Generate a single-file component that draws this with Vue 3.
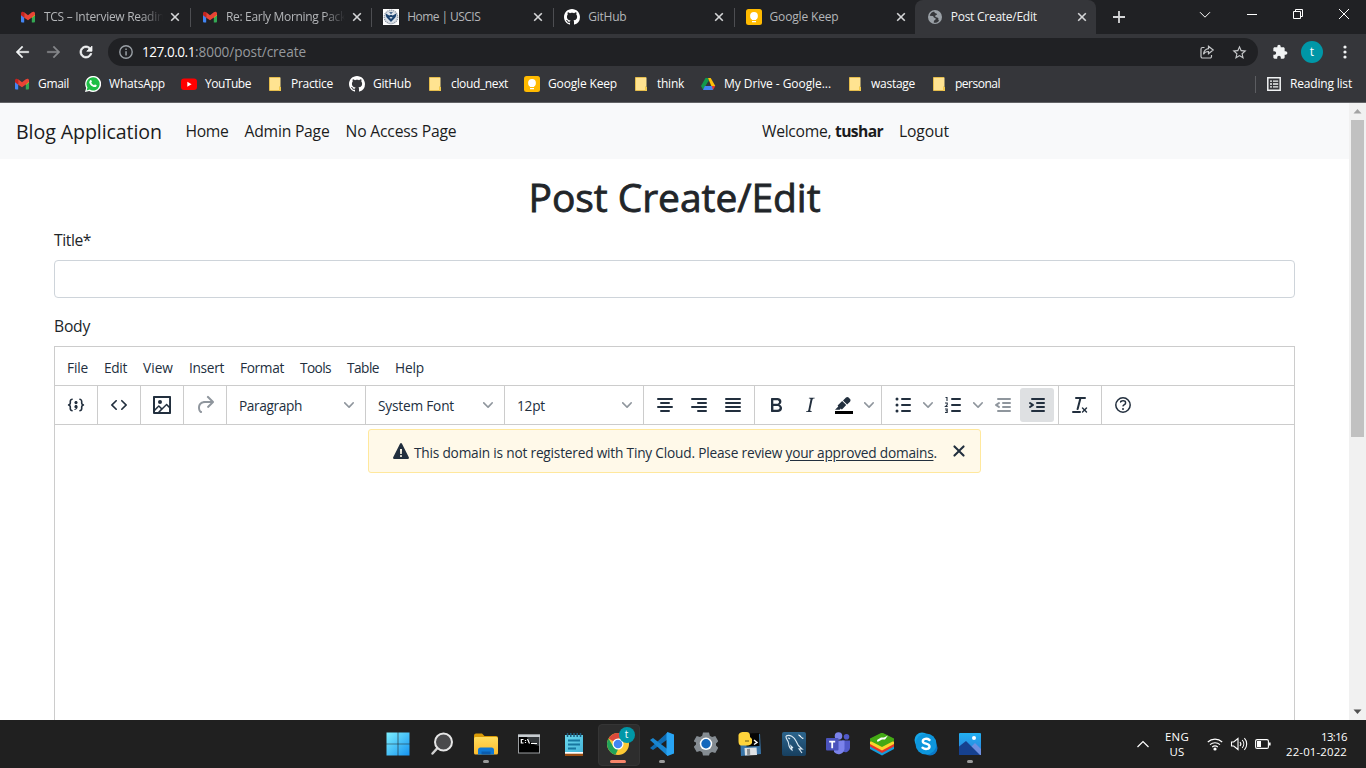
<script setup>
// Spreads the letters of a label so that it fills a given width.
const vFit = {
  mounted(el, { value }) {
    const natural = el.getBoundingClientRect().width
    const count = el.textContent.length
    el.style.letterSpacing = (value - natural) / count + 'px'
  },
}

const tabs = [
  { icon: 'gmail', title: 'TCS – Interview Readin', w: 120, fade: true },
  { icon: 'gmail', title: 'Re: Early Morning Pack', w: 120, fade: true },
  { icon: 'uscis', title: 'Home | USCIS', w: 73 },
  { icon: 'github', title: 'GitHub', w: 38 },
  { icon: 'keep', title: 'Google Keep', w: 69 },
  { icon: 'globe', title: 'Post Create/Edit', w: 86, active: true },
]

const bookmarks = [
  { icon: 'gmail', text: 'Gmail', w: 31 },
  { icon: 'whatsapp', text: 'WhatsApp', w: 56 },
  { icon: 'youtube', text: 'YouTube', w: 46 },
  { icon: 'folder', text: 'Practice', w: 42 },
  { icon: 'github', text: 'GitHub', w: 38 },
  { icon: 'folder', text: 'cloud_next', w: 57 },
  { icon: 'keep', text: 'Google Keep', w: 69 },
  { icon: 'folder', text: 'think', w: 27 },
  { icon: 'drive', text: 'My Drive - Google...', w: 107 },
  { icon: 'folder', text: 'wastage', w: 44 },
  { icon: 'folder', text: 'personal', w: 45 },
]

const menus = [
  ['File', 21], ['Edit', 23], ['View', 30], ['Insert', 35],
  ['Format', 44], ['Tools', 31], ['Table', 32], ['Help', 29],
]

const groups = [
  [{ icon: 'codesample' }],
  [{ icon: 'source' }],
  [{ icon: 'image' }],
  [{ icon: 'redo', off: true }],
  [{ select: 'Paragraph', w: 63 }],
  [{ select: 'System Font', w: 76 }],
  [{ select: '12pt', w: 28 }],
  [{ icon: 'aligncenter' }, { icon: 'alignright' }, { icon: 'justify' }],
  [{ icon: 'bold' }, { icon: 'italic' }, { icon: 'highlight', split: true }],
  [{ icon: 'bullist', split: true }, { icon: 'numlist', split: true }, { icon: 'outdent', off: true }, { icon: 'indent', on: true }],
  [{ icon: 'removeformat' }],
  [{ icon: 'help' }],
]

const apps = [
  { icon: 'windows' }, { icon: 'search' }, { icon: 'explorer', open: true }, { icon: 'cmd' },
  { icon: 'notepad' }, { icon: 'chrome', current: true }, { icon: 'vscode', open: true },
  { icon: 'settings' }, { icon: 'python' }, { icon: 'mysql' }, { icon: 'teams' },
  { icon: 'bluestacks' }, { icon: 'skype' }, { icon: 'photos', open: true },
]
</script>

<template>
  <div class="screen">
    <svg class="defs" aria-hidden="true">
      <defs>
        <linearGradient id="g-win" x1="0" y1="0" x2="1" y2="1"><stop offset="0" stop-color="#7df0ff" /><stop offset="1" stop-color="#1593f0" /></linearGradient>
        <linearGradient id="g-fold" x1="0" y1="0" x2="0" y2="1"><stop offset="0" stop-color="#ffdc5c" /><stop offset="1" stop-color="#fdbb2d" /></linearGradient>
        <linearGradient id="g-note" x1="0" y1="0" x2="1" y2="1"><stop offset="0" stop-color="#6ad9ee" /><stop offset="1" stop-color="#45b4d8" /></linearGradient>
        <linearGradient id="g-sql" x1="0" y1="0" x2="0" y2="1"><stop offset="0" stop-color="#2c648c" /><stop offset="1" stop-color="#173f5f" /></linearGradient>
        <linearGradient id="g-sky" x1="0" y1="0" x2="0" y2="1"><stop offset="0" stop-color="#22b0f2" /><stop offset="1" stop-color="#2d7bd8" /></linearGradient>
      </defs>

      <symbol id="gmail" viewBox="0 0 16 16">
        <path fill="#4285f4" d="M1 5l3.2 2.4v6H2a1 1 0 01-1-1z" />
        <path fill="#34a853" d="M15 5l-3.2 2.4v6H14a1 1 0 001-1z" />
        <path fill="#fbbc04" d="M11.8 4.5L15 4.2V6.300l-3.200 2.600z" />
        <path fill="#c5221f" d="M1 4.300C1 2.800 2.700 2.200 4.200 3.300v5.500L1 6.300z" />
        <path fill="#ea4335" d="M4.200 3.300L8 6.200l3.800-2.900C13.300 2.200 15 2.800 15 4.300v1.500l-3.200 2.700L8 11.300 4.200 8.700z" />
      </symbol>
      <symbol id="uscis" viewBox="0 0 16 16">
        <path fill="#fff" d="M0 0h16v16H0z" />
        <circle cx="8" cy="8" r="6.800" fill="#d5dae1" stroke="#8b95a3" stroke-width="1.200" stroke-dasharray="1.200 .8" />
        <circle cx="8" cy="8" r="5.200" fill="#dfe5ec" />
        <path fill="#1d4470" d="M2.800 4.500l3.400 2L8 5.800l1.800.7 3.400-2c.3 2-.4 3.800-1.800 5L8 13 4.600 9.500C3.200 8.300 2.500 6.500 2.800 4.500zM6 3.200h4L8 5z" />
        <path fill="#fff" d="M6.300 8.200h3.400L8 9.800z" />
      </symbol>
      <symbol id="github" viewBox="0 0 16 16">
        <path fill="#fff" d="M8 0C3.58 0 0 3.58 0 8c0 3.54 2.29 6.53 5.47 7.59.4.07.55-.17.55-.38 0-.19-.01-.82-.01-1.49-2.01.37-2.53-.49-2.69-.94-.09-.23-.48-.94-.82-1.130-.28-.15-.68-.52-.01-.53.63-.01 1.080.58 1.230.82.72 1.210 1.870.87 2.330.66.07-.52.28-.87.51-1.070-1.780-.2-3.640-.89-3.640-3.950 0-.87.31-1.590.82-2.150-.08-.2-.36-1.020.08-2.120 0 0 .67-.21 2.200.82.64-.18 1.320-.27 2-.27s1.360.09 2 .27c1.530-1.040 2.200-.82 2.200-.82.44 1.100.16 1.920.08 2.120.51.56.82 1.270.82 2.150 0 3.070-1.870 3.750-3.650 3.950.29.25.54.73.54 1.480 0 1.070-.01 1.930-.01 2.200 0 .21.15.46.55.38A8.010 8.010 0 0016 8c0-4.420-3.580-8-8-8z" />
      </symbol>
      <symbol id="keep" viewBox="0 0 16 16">
        <rect width="16" height="16" rx="2.500" fill="#ffba00" />
        <circle cx="8" cy="7" r="3.900" fill="#fff" /><path fill="#fff" d="M6 9h4v2H6zM6 12h4v1.300H6z" />
      </symbol>
      <symbol id="globe" viewBox="0 0 16 16">
        <circle cx="8" cy="8" r="7" fill="#9aa0a6" />
        <path fill="#35363a" d="M7.200 2.400c-2 .2-4 2-4.500 4.400l3 .3c1 .2.600 1.500 1.800 1.700 1 .1 1.500.8 1 1.700-.4.700-1.500.6-1.600 1.500l-.1 1.700c2.200.4 4.300-.6 5.400-2.300-.9 0-1-.7-.8-1.400.200-.8-.3-1.500-1.300-1.600-1.200 0-2.200-.7-1.800-1.700.3-.8 1.400-.5 1.700-1.200.2-.6-.2-1-.8-1.100-1-.2-1.900-1-2-2z" />
      </symbol>
      <symbol id="whatsapp" viewBox="0 0 16 16">
        <path fill="#fff" d="M0 16l1.200-4.100A8 8 0 114.200 14.900z" />
        <path fill="#1fbe46" d="M1.600 14.400l.9-2.900a6.600 6.600 0 112.200 2.100z" />
        <path fill="#fff" d="M5.300 4.200c.4-.4.9-.3 1.100.2l.5 1.200c.1.400-.5.800-.6 1.100.6 1.200 1.500 2 2.800 2.500.4-.2.600-.9 1-.8l1.300.7c.4.2.3.700.1 1.100-.5.900-1.700 1.100-2.800.7-2.200-.7-3.600-2.200-4.300-4-.3-.9.2-2 .9-2.700z" />
      </symbol>
      <symbol id="youtube" viewBox="0 0 16 16"><rect y="2.500" width="16" height="11.500" rx="3" fill="#f00" /><path fill="#fff" d="M6.300 5.800v4.900l4.300-2.450z" /></symbol>
      <symbol id="folder" viewBox="0 0 16 16">
        <path fill="#ffe391" d="M2.500 1.500h11v9.500l.5 1v2.500H2.500z" /><path fill="none" stroke="#e5bd4c" d="M13 1.500H2.500v13h11.200M12.500 14v-3.500" /><path fill="#f2c94c" d="M12 11h2v4h-2z" />
      </symbol>
      <symbol id="drive" viewBox="0 0 16 16">
        <path fill="#12994d" d="M5.500 2H8l1 2.200L3.200 13.800 1 10z" /><path fill="#ffc107" d="M8 2h2.700L15.300 10h-4z" /><path fill="#e53935" d="M11.300 10h4L13 14l-3-3z" /><path fill="#4285f4" d="M4.800 10h6.900L13 14H3z" /><path fill="#35363a" d="M8 6.200L5.800 10h4.400z" />
      </symbol>

      <symbol id="codesample" viewBox="0 1 24 24"><path d="M7.1 11a2.800 2.800 0 01-.8 2 2.800 2.800 0 01.8 2v1.700c0 .3.1.6.4.8.2.3.5.4.8.4.3 0 .4.2.4.4v.8c0 .2-.1.4-.4.4-.7 0-1.400-.3-2-.8-.5-.6-.8-1.300-.8-2V15c0-.3-.1-.6-.4-.8-.2-.3-.5-.4-.8-.4a.4.4 0 01-.4-.4v-.8c0-.2.2-.4.4-.4.3 0 .6-.1.8-.4.3-.2.4-.5.4-.8V9.300c0-.7.3-1.400.8-2 .6-.5 1.300-.8 2-.8.3 0 .4.2.4.4v.8c0 .2-.1.4-.4.4-.3 0-.6.1-.8.4-.3.2-.4.5-.4.8V11zm9.800 0V9.300c0-.3-.1-.6-.4-.8-.2-.3-.5-.4-.8-.4a.4.4 0 01-.4-.4V7c0-.2.1-.4.4-.4.7 0 1.400.3 2 .8.5.6.8 1.300.8 2V11c0 .3.1.6.4.8.2.3.5.4.8.4.2 0 .4.2.4.4v.8c0 .2-.2.4-.4.4-.3 0-.6.1-.8.4-.3.2-.4.5-.4.8v1.700c0 .7-.3 1.400-.8 2-.6.5-1.300.8-2 .8a.4.4 0 01-.4-.4v-.8c0-.2.1-.4.4-.4.3 0 .6-.1.8-.4.3-.2.4-.5.4-.8V15a2.800 2.800 0 01.8-2 2.800 2.800 0 01-.8-2zm-3.300-.4c0 .4-.1.8-.5 1.100-.3.3-.7.5-1.100.5-.4 0-.8-.2-1.100-.5-.4-.3-.5-.7-.5-1.100 0-.5.1-.9.5-1.200.3-.3.7-.4 1.100-.4.4 0 .8.1 1.100.4.4.3.5.7.5 1.200zM12 13c.4 0 .8.1 1.100.5.4.3.5.7.5 1.100 0 1-.1 1.600-.5 2a3 3 0 01-1.100 1c-.4.3-.8.4-1.100.4a.5.5 0 01-.5-.5V17a3 3 0 001-.2l.6-.6c-.6 0-1-.2-1.300-.5-.2-.3-.3-.7-.3-1 0-.5.1-1 .5-1.200.3-.4.7-.5 1.100-.5z" /></symbol>
      <symbol id="source" viewBox="0 0 24 24"><path d="M9.800 15.700c.3.3.3.8 0 1-.3.4-.9.4-1.200 0l-4.400-4.100a.8.8 0 010-1.200l4.400-4.200c.3-.3.9-.3 1.200 0 .3.3.3.8 0 1.100L6 12l3.800 3.700zM14.200 15.700c-.3.3-.3.8 0 1 .4.4.9.4 1.200 0l4.400-4.100c.3-.3.3-.9 0-1.200l-4.400-4.200a.8.8 0 00-1.200 0c-.3.3-.3.8 0 1.100L18 12l-3.800 3.700z" /></symbol>
      <symbol id="image" viewBox="0 0 24 24"><path fill-rule="evenodd" d="M5 15.700l3.300-3.200c.3-.3.7-.3 1 0L12 15l4.100-4c.3-.4.8-.4 1 0l2 1.900V5H5v10.700zM5 18V19h3l2.800-2.900-2-2L5 17.900zm14-3l-2.500-2.400-6.400 6.500H19v-4zM4 3h16c.6 0 1 .4 1 1v16c0 .6-.4 1-1 1H4a1 1 0 01-1-1V4c0-.6.4-1 1-1zm6 8a2 2 0 100-4 2 2 0 000 4z" /></symbol>
      <symbol id="redo" viewBox="0 0 24 24"><path d="M17.600 10H12c-2.800 0-4.400 1.400-4.900 3.500-.4 2 .3 4 1.400 4.600a1 1 0 11-1 1.800c-2-1.200-2.900-4.100-2.300-6.800.6-3 3-5.100 6.800-5.100h5.600l-3.300-3.300a1 1 0 111.400-1.400l5 5a1 1 0 010 1.400l-5 5a1 1 0 01-1.400-1.400l3.300-3.300z" /></symbol>
      <symbol id="aligncenter" viewBox="0 0 24 24"><path class="ln" d="M5 6h14M8 10h8M5 14h14M8 18h8" /></symbol>
      <symbol id="alignright" viewBox="0 0 24 24"><path class="ln" d="M5 6h14M11 10h8M5 14h14M11 18h8" /></symbol>
      <symbol id="justify" viewBox="0 0 24 24"><path class="ln" d="M5 6h14M5 10h14M5 14h14M5 18h14" /></symbol>
      <symbol id="bold" viewBox="0 0 24 24"><path fill-rule="evenodd" d="M7.800 19c-.3 0-.5 0-.6-.2l-.2-.5V5.700c0-.2 0-.4.2-.5l.6-.2h5c1.500 0 2.700.3 3.500 1 .7.6 1.100 1.400 1.100 2.500a3 3 0 01-.6 1.900c-.4.6-1 1-1.600 1.200.4.1.9.3 1.300.6s.8.7 1 1.200c.4.4.5 1 .5 1.600 0 1.300-.4 2.300-1.300 3-.8.7-2.100 1-3.800 1H7.800zm5-8.300c.6 0 1.200-.1 1.600-.5.4-.3.6-.7.6-1.300 0-1.100-.8-1.700-2.300-1.700H9.300v3.500h3.400zm.5 6c.7 0 1.300-.1 1.700-.4.4-.4.6-.9.6-1.500s-.2-1-.7-1.400c-.4-.3-1-.4-2-.4H9.400v3.800h4z" /></symbol>
      <symbol id="italic" viewBox="0 0 24 24"><path d="M16.700 4.700l-.1.900h-.3c-.6 0-1 0-1.400.3-.3.3-.4.6-.5 1.100l-2.100 9.800v.6c0 .5.4.8 1.400.8h.2l-.2.8H8l.2-.8h.2c1.100 0 1.800-.5 2-1.500l2-9.800.1-.5c0-.6-.4-.8-1.400-.8h-.3l.2-.9h5.800z" /></symbol>
      <symbol id="highlight" viewBox="0 0 24 24"><path fill="#000" d="M3 18h18v3H3z" /><path d="M7.700 16.700H3l3.300-3.300-.7-.8L10.200 8l4 4.100-4 4.200c-.2.2-.6.2-.8 0l-.6-.7-1.100 1.100zm5-7.500L11 7.400l3-2.900a2 2 0 012.600 0L18 6c.7.700.7 2 0 2.700l-2.900 2.900-1.800-1.800-.5-.6" /></symbol>
      <symbol id="bullist" viewBox="0 0 24 24"><path class="ln" d="M11 6h8M11 12h8M11 18h8" /><circle cx="6" cy="6" r="1.500" /><circle cx="6" cy="12" r="1.500" /><circle cx="6" cy="18" r="1.500" /></symbol>
      <symbol id="numlist" viewBox="0 0 24 24"><path class="ln" d="M11 6h8M11 12h8M11 18h8" /><path fill="none" stroke="#222f3e" stroke-width="1.100" d="M4.500 4.500H6V8M4 10h2.200v1.800L4.500 13.500h2.200M4 16h2.200v3.500H4M4.600 17.700h1.500" /></symbol>
      <symbol id="outdent" viewBox="0 0 24 24"><path class="ln" d="M7 6h12M12 10h7M12 14h7M7 18h12" /><path d="M8.600 13.200a1 1 0 01-1.200 1.600l-3-2a1 1 0 010-1.600l3-2a1 1 0 011.200 1.600L6.800 12l1.800 1.200z" /></symbol>
      <symbol id="indent" viewBox="0 0 24 24"><path class="ln" d="M7 6h12M12 10h7M12 14h7M7 18h12" /><path d="M4.400 13.200L6.200 12l-1.800-1.200a1 1 0 011.200-1.600l3 2a1 1 0 010 1.600l-3 2a1 1 0 01-1.200-1.600z" /></symbol>
      <symbol id="removeformat" viewBox="0 0 24 24"><path d="M13.200 6a1 1 0 010 .2l-2.600 10a1 1 0 01-1 .8h-.2a.8.8 0 01-.8-1l2.600-10H8a1 1 0 110-2h9a1 1 0 010 2h-3.800zM5 18h7a1 1 0 010 2H5a1 1 0 010-2zm13 1.500L16.500 18 15 19.500a.7.700 0 01-1-1l1.500-1.500-1.500-1.500a.7.700 0 011-1l1.500 1.500 1.500-1.500a.7.700 0 011 1L17.500 17l1.500 1.500a.7.700 0 01-1 1z" /></symbol>
      <symbol id="help" viewBox="0 0 24 24"><circle cx="12" cy="12" r="7.200" fill="none" stroke="#222f3e" stroke-width="1.500" /><path d="M9.600 9.700a.7.700 0 01-.7-.8c0-1.100 1.500-1.800 3.200-1.800 1.800 0 3.200.8 3.200 2.400 0 1.400-.4 2.100-1.500 2.800-.2 0-.3.1-.3.200a2 2 0 00-.8.8.8.800 0 01-1.400-.6c.3-.7.8-1 1.300-1.500l.4-.2c.7-.4.8-.6.8-1.500 0-.5-.6-.9-1.700-.9-.5 0-1 .1-1.400.3-.2 0-.3.1-.3.200v-.2c0 .4-.4.8-.8.800z" /><circle cx="12" cy="16" r="1" /></symbol>
      <symbol id="chev" viewBox="0 0 10 10"><path d="M8.700 2.200c.3-.3.8-.3 1 0 .4.4.4.9 0 1.200L5.700 7.800c-.3.3-.9.3-1.200 0L.2 3.400a.8.800 0 010-1.200c.3-.3.8-.3 1.100 0L5 6l3.700-3.800z" /></symbol>
      <symbol id="warning" viewBox="4 4 16 16"><path fill-rule="evenodd" d="M19.800 18.300c.2.500.3.900 0 1.200-.1.300-.5.500-1 .5H5.200c-.5 0-.9-.2-1-.5-.3-.3-.2-.7 0-1.200L11 4.700l.5-.5.5-.2c.2 0 .3 0 .5.2.2 0 .3.300.5.500l6.800 13.600zM12 18c.3 0 .5-.1.700-.3.2-.2.300-.4.300-.7a1 1 0 00-.3-.7 1 1 0 00-.7-.3 1 1 0 00-.7.3 1 1 0 00-.3.700c0 .3.1.5.3.7.2.2.4.3.7.3zm.8-3l.2-5h-2l.2 5h1.600z" /></symbol>
      <symbol id="close" viewBox="0 0 24 24"><path d="M17.300 8.200L13.400 12l3.900 3.800a1 1 0 01-1.500 1.500L12 13.400l-3.800 3.900a1 1 0 01-1.500-1.500l3.900-3.800-3.900-3.800a1 1 0 011.500-1.500l3.800 3.900 3.800-3.900a1 1 0 011.500 1.500z" /></symbol>

      <symbol id="windows" viewBox="0 0 24 24"><path fill="url(#g-win)" d="M.5.500h11.200v11.200H.5zM12.300.5h11.200v11.200H12.300zM.5 12.300h11.200v11.200H.5zM12.300 12.300h11.200v11.200H12.300z" /></symbol>
      <symbol id="search" viewBox="0 0 24 24"><path stroke="#d0d0d0" stroke-width="2.500" stroke-linecap="round" d="M2.500 21.500L7.500 16" /><circle cx="13.500" cy="10" r="8.500" fill="#4a4a4c" stroke="#e6e6e6" stroke-width="2" /></symbol>
      <symbol id="explorer" viewBox="0 0 24 24"><path fill="#d99a06" d="M0 3.500A2 2 0 012 1.500h6l2.500 2.500H22a2 2 0 012 2V12H0z" /><rect y="5" width="24" height="17.500" rx="1.500" fill="url(#g-fold)" /><path fill="#0f78d4" d="M4 22.500V18a2.500 2.500 0 012.500-2.500h11A2.500 2.500 0 0120 18v4.500z" /><path fill="#0b5cad" d="M7.500 19.500h9v3h-9z" /></symbol>
      <symbol id="cmd" viewBox="1 0 24 24"><rect x="1.500" y="3" width="21" height="18" fill="#000" stroke="#9a9da0" /><path fill="#c7ccd0" d="M1 2.500h22v2.500H1z" /><path fill="#555c60" opacity=".6" d="M10 5h12v9C17 13 12 10 10 5z" /><path fill="none" stroke="#fff" stroke-width="1.200" d="M6.500 7.500H4.300V11h2.200M8.500 8v1M8.500 10v1M10.500 7l2 4.500M14 11.500h6" /></symbol>
      <symbol id="notepad" viewBox="0 0 24 24"><rect x="3" y="3" width="18" height="18" fill="url(#g-note)" /><path fill="#fff" d="M3 20h18v2H3z" /><path fill="#9b4d12" d="M3 21.700h18V24H3z" /><path stroke="#1777a0" stroke-width="1.800" d="M6 8.500h12M6 12.500h12M6 16.500h8" /><path stroke="#1d5d80" stroke-width="1.500" d="M5.500 1v4M8.800 1v4M12 1v4M15.200 1v4M18.500 1v4" /></symbol>
      <symbol id="chrome" viewBox="0 0 24 24"><circle cx="12" cy="12" r="11" fill="#fcc934" /><path fill="#dc4a3c" d="M12 12L2.500 6.500A11 11 0 0121.500 6.500H12z" /><path fill="#21a35a" d="M2.500 6.500L7.500 15l4.500 2.500L9.500 22.700A11 11 0 012.500 6.500z" /><circle cx="12" cy="12" r="5.500" fill="#fff" /><circle cx="12" cy="12" r="4.300" fill="#4285f4" /></symbol>
      <symbol id="vscode" viewBox="0 0 24 24"><path fill="#0f6cb3" d="M0 16l3 2L18 7V0L3 13.500z" /><path fill="#1a86d0" d="M0 8l3-2 15 11.500V24l-1.500-1z" /><path fill="#28a4f4" d="M17.500 0L24 2.500v19L17.500 24l-1-1.500V1.500z" /></symbol>
      <symbol id="settings" viewBox="0 0 24 24"><path fill="#858c92" d="M9 .5h6l.8 3.300 2.300 1.300 3.200-1 3 5.200-2.300 2.200v2l2.300 2.300-3 5.200-3.300-1-2.200 1.300L15 23.500H9l-.8-3.200L6 19l-3.300 1-3-5.200L2 12.500v-2L-.300 9.300l3-5.200 3.300 1 2.200-1.300z" /><circle cx="12" cy="11.800" r="6.200" fill="#fff" /><circle cx="12" cy="11.800" r="4.700" fill="#1467bc" /></symbol>
      <symbol id="python" viewBox="0 0 24 24"><path fill="#3774a8" d="M2 4l20-2 1 20-20 2z" /><path fill="#050505" d="M9 1.500l12-.5.500 13-13 .5z" /><path fill="#dfe2e5" d="M6.500 16l12-.5.5 7.500-12 .5z" /><path fill="#858c92" d="M9 17l3-.2.2 6-3 .2z" /><path fill="#ffd43b" d="M.5 3C1 .5 4 0 6.500 0h2C11 0 12 1.500 12 4v1l2 2v4c-1 2-3 2.500-6 2.500H4c-3 0-3.500-2-3.500-5z" /><path fill="none" stroke="#6b5a10" d="M7 9h4" /><path fill="none" stroke="#fff" stroke-width="1.500" d="M16 8l3 2.500-3 2" /></symbol>
      <symbol id="mysql" viewBox="0 0 24 24"><rect width="24" height="24" rx="2" fill="url(#g-sql)" /><path fill="none" stroke="#dbe9f3" stroke-width="1.100" d="M4 4c4-2 8 1 10 5 1 3 2 5 6 8l-3-.2 3 4.200M4 4c-.5 3 2 4 2.500 7 .3 3 1 5.500 3.500 7l-1-4 2 2M6 6c1 0 1.500.5 2 1" /><path fill="#fff" d="M16 2.500l2 .5 2 2.500 2 .5-1.500 1-4-3.500z" /></symbol>
      <symbol id="teams" viewBox="0 0 24 24"><circle cx="12.500" cy="4" r="3.800" fill="#7b83eb" /><circle cx="20.500" cy="4.700" r="2.800" fill="#5059c9" /><path fill="#5059c9" d="M16 8.500h8v7a4.500 4.500 0 01-8 3z" /><path fill="#7b83eb" d="M8 8.500h10.500V17A6 6 0 018 20z" /><rect y="6" width="12.500" height="12.500" rx="1" fill="#4b53bc" /><path fill="#fff" d="M3.200 8.800h6v1.700H7.100v5.700H5.300v-5.700H3.200z" /></symbol>
      <symbol id="bluestacks" viewBox="0 0 24 24"><path fill="#149ddd" d="M0 14l12-4 12 4v3l-12 6.500L0 17z" /><path fill="#e5332a" d="M0 12l12-4 12 4v2.500L12 21 0 14.500z" /><path fill="#fbd52c" d="M0 9.500L12 6l12 3.500V12L12 18.500 0 12z" /><path fill="#43a914" d="M0 6.500L11 1h2l11 5.500v2.300L12 15 0 8.800z" /><path fill="#fff" d="M7 8l4-2.500h3l4-2-3 4h-3L7.500 10z" /></symbol>
      <symbol id="skype" viewBox="0 0 24 24"><circle cx="8" cy="8" r="7.500" fill="#16a6e8" /><circle cx="16" cy="16" r="7.500" fill="#0a78c8" /><circle cx="12" cy="12" r="10.500" fill="#0d96dd" /><path fill="none" stroke="#fff" stroke-width="2.400" stroke-linecap="round" d="M15.500 8C13 6 8.800 6.600 8.800 9.200c0 3.300 6.700 1.700 6.700 5.300 0 2.800-4.500 3.300-7 1.200" /></symbol>
      <symbol id="photos" viewBox="0 0 24 24"><rect x="1" y="1" width="22" height="22" rx="1" fill="url(#g-sky)" /><circle cx="16" cy="6" r="2" fill="#fff" /><path fill="#6d8fe0" d="M13 15l4-4 6 6v6h-8z" /><path fill="#16418f" d="M1 14.500L8 9l14 14H1z" /></symbol>
    </svg>

    <header class="chrome">
      <div class="strip">
        <div class="tabs">
          <div v-for="(t, i) in tabs" :key="i" class="tab" :class="{ active: t.active }">
            <svg class="i16"><use :href="'#' + t.icon" /></svg>
            <span class="title" :class="{ fade: t.fade }"><span v-fit="t.w" class="fit">{{ t.title }}</span></span>
            <svg class="x" viewBox="0 0 10 10"><path d="M1.200 1.200l7.600 7.600M8.800 1.200L1.200 8.800" /></svg>
          </div>
        </div>
        <svg class="plus" viewBox="0 0 12 12"><path d="M6 0v12M0 6h12" /></svg>
        <svg class="winctl" viewBox="0 0 152 14"><path d="M1 5.200l5 5 5-5M48 7.500h10M94.500 4.500h7v7h-7zM96.500 4v-1.500h7v7H102M140 2l10 10M150 2l-10 10" /></svg>
      </div>

      <div class="toolbar">
        <svg class="nav" viewBox="0 0 24 24"><path fill="#f1f3f4" stroke="#f1f3f4" stroke-width=".5" d="M21 11H7.830l5.590-5.590L12 4l-8 8 8 8 1.410-1.410L7.830 13H21v-2z" /></svg>
        <svg class="nav" viewBox="0 0 24 24"><path fill="#85878a" stroke="#85878a" stroke-width=".5" d="M3 11h13.170l-5.590-5.590L12 4l8 8-8 8-1.410-1.410L16.170 13H3v-2z" /></svg>
        <svg class="nav" viewBox="0 0 24 24"><path fill="#f1f3f4" stroke="#f1f3f4" stroke-width="1" d="M17.650 6.350C16.200 4.900 14.210 4 12 4c-4.420 0-7.990 3.580-7.990 8s3.570 8 7.990 8c3.730 0 6.840-2.550 7.730-6h-2.080c-.82 2.330-3.040 4-5.650 4-3.310 0-6-2.690-6-6s2.690-6 6-6c1.660 0 3.140.69 4.220 1.780L13 11h7V4l-2.350 2.350z" /></svg>
        <div class="omnibox">
          <svg class="info" viewBox="0 0 14 14"><circle cx="7" cy="7" r="6.200" fill="none" stroke="#9aa0a6" stroke-width="1.400" /><path fill="#9aa0a6" d="M6.300 6.200h1.500v4.300H6.300zM6.300 3.500h1.500V5H6.300z" /></svg>
          <span class="url"><b v-fit="53" class="fit">127.0.0.1</b><span v-fit="111" class="fit">:8000/post/create</span></span>
          <svg class="share" viewBox="0 0 16 16"><path d="M5.500 3.500h-2A1.500 1.500 0 002 5v7.500A1.500 1.500 0 003.500 14H11a1.500 1.500 0 001.500-1.500V11M9.500 2.200L14.200 6 9.500 9.800V7.500C7 7.500 5.500 8.500 4.500 10.300 4.800 7 6.500 5 9.500 4.600z" /></svg>
          <svg class="star" viewBox="0 0 24 24"><path fill="#c6c8ca" d="M22 9.240l-7.190-.62L12 2 9.190 8.630 2 9.240l5.460 4.730L5.820 21 12 17.270 18.180 21l-1.630-7.030L22 9.240zM12 15.400l-3.760 2.270 1-4.280-3.320-2.880 4.380-.38L12 6.100l1.710 4.040 4.380.38-3.320 2.880 1 4.280L12 15.400z" /></svg>
        </div>
        <svg class="puzzle" viewBox="0 0 24 24"><path fill="#f1f3f4" d="M20.500 11H19V7c0-1.100-.9-2-2-2h-4V3.500C13 2.120 11.880 1 10.500 1S8 2.120 8 3.500V5H4c-1.100 0-1.990.9-1.990 2v3.800H3.500c1.490 0 2.700 1.210 2.700 2.700s-1.210 2.700-2.700 2.700H2V20c0 1.100.9 2 2 2h3.800v-1.500c0-1.490 1.210-2.700 2.700-2.700 1.490 0 2.700 1.210 2.700 2.700V22H17c1.100 0 2-.9 2-2v-4h1.500c1.380 0 2.500-1.120 2.500-2.500S21.880 11 20.500 11z" /></svg>
        <span class="avatar">t</span>
        <svg class="dots" viewBox="0 0 4 14"><circle cx="2" cy="2" r="1.600" /><circle cx="2" cy="7" r="1.600" /><circle cx="2" cy="12" r="1.600" /></svg>
      </div>

      <div class="marks">
        <span v-for="(b, i) in bookmarks" :key="i" class="mark">
          <svg class="i16"><use :href="'#' + b.icon" /></svg><span v-fit="b.w" class="fit">{{ b.text }}</span>
        </span>
        <span class="reading">
          <svg class="rl" viewBox="0 0 14 14"><path fill="none" stroke="#f1f3f4" stroke-width="1.500" d="M.8.800h12.400v12.400H.8z" /><path stroke="#f1f3f4" stroke-width="1.300" d="M3 4.200h2M6 4.200h5.200M3 7h2M6 7h5.200M3 9.800h2M6 9.800h5.200" /></svg>
          <span v-fit="62" class="fit">Reading list</span>
        </span>
      </div>
    </header>

    <main class="view">
      <div class="page">
        <nav class="navbar">
          <a v-fit="146" class="fit brand">Blog Application</a>
          <a v-fit="43" class="fit">Home</a>
          <a v-fit="85" class="fit">Admin Page</a>
          <a v-fit="111" class="fit">No Access Page</a>
          <span class="user"><span v-fit="73" class="fit pre">Welcome, </span><b v-fit="48" class="fit">tushar</b></span>
          <a v-fit="50" class="fit">Logout</a>
        </nav>
        <div class="content">
          <h1><span v-fit="292" class="fit">Post Create/Edit</span></h1>
          <label class="l1"><span v-fit="37" class="fit">Title*</span></label>
          <div class="field"></div>
          <label class="l2"><span v-fit="36" class="fit">Body</span></label>
          <div class="editor">
            <div class="menubar"><span v-for="m in menus" :key="m[0]" v-fit="m[1]" class="fit">{{ m[0] }}</span></div>
            <div class="tools">
              <div v-for="(g, i) in groups" :key="i" class="group">
                <template v-for="(b, j) in g" :key="j">
                  <div v-if="b.select" class="select"><span v-fit="b.w" class="fit">{{ b.select }}</span><svg class="chev"><use href="#chev" /></svg></div>
                  <div v-else class="btn" :class="{ off: b.off, on: b.on, split: b.split }">
                    <svg class="i24"><use :href="'#' + b.icon" /></svg>
                    <svg v-if="b.split" class="chev"><use href="#chev" /></svg>
                  </div>
                </template>
              </div>
            </div>
            <div class="canvas">
              <div class="notice">
                <svg class="warn"><use href="#warning" /></svg>
                <p><span v-fit="371.500" class="fit pre">This domain is not registered with Tiny Cloud. Please review </span><a v-fit="148" class="fit">your approved domains</a>.</p>
                <svg class="i24 dismiss"><use href="#close" /></svg>
              </div>
            </div>
          </div>
        </div>
      </div>
      <div class="scroll">
        <svg viewBox="0 0 17 17"><path fill="#a3a3a3" d="M8.500 6l4 4.500h-8z" /></svg>
        <div class="thumb"></div>
        <svg class="down" viewBox="0 0 17 17"><path fill="#505050" d="M8.500 11l4-4.500h-8z" /></svg>
      </div>
    </main>

    <footer class="taskbar">
      <div class="apps">
        <div v-for="a in apps" :key="a.icon" class="app" :class="{ open: a.open, current: a.current }">
          <svg class="i24"><use :href="'#' + a.icon" /></svg>
          <span v-if="a.current" class="badge">t</span>
        </div>
      </div>
      <div class="tray">
        <svg class="up" viewBox="0 0 12 8"><path d="M.5 7L6 1.500 11.500 7" /></svg>
        <div class="lang"><span v-fit="24" class="fit">ENG</span><span v-fit="15" class="fit">US</span></div>
        <svg class="net" viewBox="0 0 64 16"><path d="M.8 6a10.500 10.500 0 0114.400 0M3 8.600a7.500 7.500 0 0110 0M5.200 11a4.500 4.500 0 015.600 0" /><circle cx="8" cy="13" r="1.600" fill="#fff" stroke="none" /><path d="M24.500 6h2.200L31 2.500v11L26.700 10h-2.200zM33 6a3 3 0 010 4M35.200 4a6 6 0 010 8M37.400 2.200a8.500 8.500 0 010 11.600" /><rect x="48.600" y="3.600" width="12.800" height="8.800" rx="1.500" /><path fill="#fff" stroke="none" d="M50 5h4v6h-4zM62 6.500h1.600v3H62z" /></svg>
        <div class="clock"><span v-fit="26" class="fit">13:16</span><span v-fit="61" class="fit">22-01-2022</span></div>
      </div>
    </footer>
  </div>
</template>

<style>
html, body { margin: 0; overflow: hidden; }
</style>

<style scoped>
* { box-sizing: border-box; }
svg { display: block; flex: none; }
.defs { position: absolute; width: 0; height: 0; }
.ln { fill: none; stroke: currentColor; stroke-width: 2; stroke-linecap: round; }
.i16 { width: 16px; height: 16px; }
.i24 { width: 24px; height: 24px; }
.fit { display: inline-block; white-space: nowrap; flex: none; }
.pre { white-space: pre; }
.screen { width: 1366px; height: 768px; display: flex; flex-direction: column; overflow: hidden; font-family: "Open Sans", "Noto Sans", sans-serif; background: #fff; }

.chrome { height: 103px; background: #35363a; border-bottom: 1px solid #626366; color: #fff; font-size: 12px; }
.strip { height: 34px; background: #202124; display: flex; padding-left: 9px; }
.tabs { display: grid; grid-template-columns: repeat(6, 181.2px); }
.tab { display: flex; align-items: center; padding-left: 11.800px; color: #b4b6b9; position: relative; }
.tab:first-child { padding-left: 11px; }
.tab:not(:first-child):not(.active)::before { content: ""; position: absolute; left: 0; top: 8px; width: 1px; height: 19px; background: #4d4e52; }
.tab.active { background: #35363a; color: #f1f3f4; border-radius: 8px 8px 0 0; }
.tab .title { width: 119px; margin-left: 8px; overflow: hidden; line-height: 18px; }
.tab .fade { -webkit-mask-image: linear-gradient(90deg, #000 82%, transparent); mask-image: linear-gradient(90deg, #000 82%, transparent); }
.tab .x { width: 10px; height: 10px; margin-left: 7px; fill: none; stroke: #d5d6d8; stroke-width: 1.600; }
.plus { width: 12px; height: 12px; margin: 11px 0 0 17px; stroke: #d5d6d8; stroke-width: 1.800; }
.winctl { width: 152px; height: 14px; margin: 7px 0 0 74px; fill: none; stroke: #fff; stroke-width: 1; }

.toolbar { height: 36px; display: flex; align-items: center; padding-left: 13px; }
.nav { width: 18px; height: 18px; margin-right: 14px; }
.nav:nth-child(3) { margin-right: 13px; }
.omnibox { width: 1150px; height: 28px; border-radius: 14px; background: #202124; display: flex; align-items: center; padding-left: 11px; font-size: 13.600px; margin-right: 14px; }
.info { width: 14px; height: 14px; margin-right: 9px; }
.url { flex: 1; color: #96999d; line-height: 20px; }
.url b { font-weight: 400; color: #fff; }
.share { width: 16px; height: 16px; fill: none; stroke: #c6c8ca; stroke-width: 1.200; margin-right: 16px; }
.star { width: 17px; height: 17px; margin-right: 10px; }
.puzzle { width: 16px; height: 16px; margin-right: 13px; }
.avatar { width: 22px; height: 22px; border-radius: 50%; background: #0097a7; text-align: center; line-height: 21px; margin-right: 20px; }
.dots { width: 4px; height: 14px; fill: #f1f3f4; }

.marks { height: 32px; display: flex; align-items: center; gap: 16px; padding: 0 14px; line-height: 18px; padding-bottom: 4px; }
.mark { display: flex; align-items: center; gap: 8px; }
.reading { margin-left: auto; display: flex; align-items: center; gap: 9px; border-left: 1px solid #5c5d61; padding-left: 11px; height: 17px; }
.rl { width: 14px; height: 14px; }

.view { flex: 1; min-height: 0; display: flex; }
.page { width: 1349px; overflow: hidden; display: flex; flex-direction: column; color: #212529; font-size: 15.700px; }
.navbar { height: 56px; flex: none; background: #f8f9fa; display: flex; align-items: center; padding-left: 16px; gap: 16px; color: #1b1c1d; }
.brand { font-size: 19.600px; margin-right: 7.500px; }
.user { margin-left: 289.500px; white-space: nowrap; }
.content { flex: 1; display: flex; flex-direction: column; padding: 0 54px; }
h1 { margin: 14px 0 10px; font-size: 39px; line-height: 48px; font-weight: 400; -webkit-text-stroke: .8px #212529; text-align: center; flex: none; }
label { display: block; height: 24px; line-height: 24px; flex: none; margin-bottom: 6px; }
.l1 { margin-top: -3px; margin-bottom: 8px; }
.field { height: 38px; flex: none; border: 1px solid #ced4da; border-radius: 4px; margin-bottom: 16px; }
.l2 { margin-bottom: 8px; }
.editor { flex: 1; border: 1px solid #ccc; border-bottom: 0; color: #222f3e; font-size: 13.700px; }
.menubar { height: 39px; border-bottom: 1px solid #ccc; display: flex; align-items: center; gap: 16px; padding: 2px 12px 0; }
.tools { height: 39px; display: flex; border-bottom: 1px solid #ccc; }
.group { display: flex; align-items: center; padding: 0 4px; border-right: 1px solid #ccc; }
.group:last-child { border-right: 0; }
.btn { width: 34px; height: 34px; display: flex; align-items: center; padding-left: 5px; border-radius: 3px; fill: #222f3e; color: #222f3e; }
.btn.split { width: 50px; }
.btn.split .chev { margin-left: 8px; }
.btn.off { opacity: .5; }
.btn.on { background: #dee0e2; }
.chev { width: 10px; height: 10px; fill: #222f3e; opacity: .5; }
.select { width: 130px; display: flex; align-items: center; justify-content: space-between; padding: 0 7px 0 8px; height: 34px; }
.select .fit { padding-top: 1px; }
.canvas { padding-top: 4px; }
.notice { width: 613px; height: 44px; margin: 0 auto; background: #fff9e9; border: 1px solid #ffe89d; border-radius: 3px; display: flex; align-items: center; padding-left: 24px; }
.warn { width: 16px; height: 16px; fill: #222f3e; margin-right: 5px; }
.notice p { margin: 2px 0 0; width: 522px; white-space: nowrap; }
.notice a { text-decoration: underline; text-underline-offset: 2px; }
.dismiss { margin-left: 11px; fill: #222f3e; }
.scroll { width: 17px; background: #f1f1f1; display: flex; flex-direction: column; }
.scroll svg { width: 17px; height: 17px; }
.scroll .down { margin-top: auto; }
.thumb { width: 13px; height: 317px; margin-left: 2px; background: #c1c1c1; }

.taskbar { height: 48px; background: #202020; display: flex; color: #fff; font-size: 11.400px; }
.apps { display: flex; padding-left: 375.500px; }
.app { width: 44px; display: flex; align-items: center; justify-content: center; position: relative; }
.app.open::after { content: ""; position: absolute; left: 19px; top: 40px; width: 6px; height: 3px; border-radius: 2px; background: #9a9a9a; }
.app.current::before { content: ""; position: absolute; left: 2px; top: 4px; width: 40px; height: 40px; border-radius: 4px; background: #2d2d2d; border: 1px solid #353535; }
.app.current::after { content: ""; position: absolute; left: 14px; top: 40px; width: 16px; height: 3px; border-radius: 2px; background: #f7856a; }
.app.current svg { position: relative; }
.badge { position: absolute; left: 23px; top: 7px; width: 16px; height: 16px; border-radius: 50%; background: #0097a7; font-size: 10px; line-height: 15px; text-align: center; }
.tray { margin-left: auto; display: flex; align-items: center; padding-right: 19px; }
.up { width: 12px; height: 8px; fill: none; stroke: #fff; stroke-width: 1.200; margin-right: 16px; }
.lang { display: flex; flex-direction: column; align-items: center; line-height: 15px; width: 24px; margin-right: 18px; margin-top: -1px; }
.net { width: 64px; height: 16px; fill: none; stroke: #fff; stroke-width: 1.100; margin-right: 15px; }
.clock { display: flex; flex-direction: column; align-items: flex-end; line-height: 15px; margin-top: -1px; }
</style>
